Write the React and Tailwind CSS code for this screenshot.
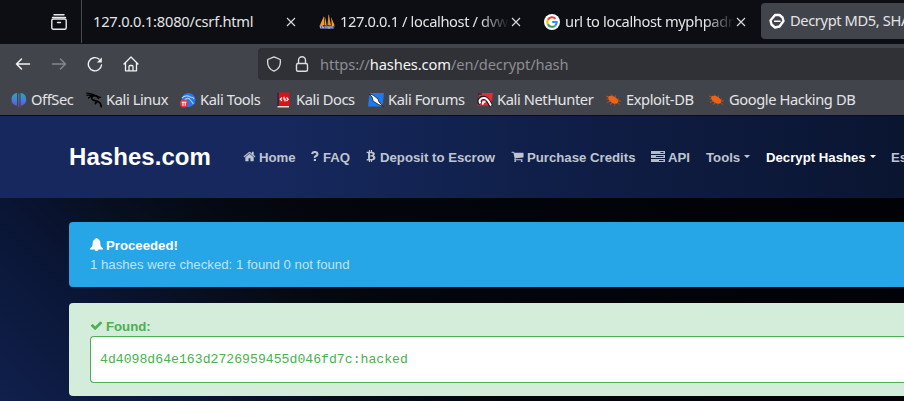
import React from "react";
import { FaBtc } from "react-icons/fa";

const Close = () => (
  <svg className="h-[10px] w-[10px] shrink-0" viewBox="0 0 10 10" stroke="#dcdce0" strokeWidth="1.1" fill="none">
    <path d="M1 1l8 8M9 1L1 9" />
  </svg>
);

const Boats = () => (
  <svg className="h-4 w-4 shrink-0" viewBox="0 0 16 16">
    <path d="M5 2L1 11h4zM6.500 3l1 8H5.500zM9.500 0L8.500 11h3.500zM12 3l3.500 8h-2.500z" fill="#f39a28" />
    <path d="M5.500 3v8M10 1v10M12.500 4v7" stroke="#b56b20" strokeWidth=".5" />
    <path d="M0 11.500h16l-1.500 3.500H1.500z" fill="#60608c" />
    <path d="M1.500 14v-2.500h2v2h1.500M7 14v-2.500M9 12v2h2v-2.500M13 14v-2.500h2" stroke="#c5c5d2" strokeWidth=".8" fill="none" />
  </svg>
);

const Google = () => (
  <svg className="h-4 w-4 shrink-0" viewBox="0 0 16 16" fill="none" strokeWidth="2.100">
    <circle cx="8" cy="8" r="8" fill="#fff" />
    <path d="M11.500 4.700A4.800 4.800 0 0 0 3.800 5.800" stroke="#ea4335" />
    <path d="M3.800 5.800a4.700 4.700 0 0 0 0 4.400" stroke="#fbbc05" />
    <path d="M3.800 10.200a4.800 4.800 0 0 0 7.500 1.500" stroke="#34a853" />
    <path d="M11.300 11.700A4.700 4.700 0 0 0 12.700 8H8.200" stroke="#4285f4" />
  </svg>
);

const HashLogo = () => (
  <svg className="h-4 w-4 shrink-0" viewBox="0 0 16 16" fill="none" stroke="#fff">
    <path d="M6 2h4.500L13.500 4.500 14.500 8 10.500 13.500 6 14.500 2.500 11.500 1.500 7.500z" strokeWidth="2.400" strokeLinejoin="round" />
    <path d="M5 8.200h6.500" strokeWidth="1.600" />
  </svg>
);

const OffSec = () => (
  <svg className="h-4 w-4 shrink-0" viewBox="0 0 16 16">
    <defs>
      <linearGradient id="offsec" x1="0" y1="0" x2="0" y2="1">
        <stop offset="0" stopColor="#2aa8bd" />
        <stop offset=".55" stopColor="#4779dc" />
        <stop offset="1" stopColor="#7045d0" />
      </linearGradient>
    </defs>
    <path d="M6 .7v13Q.5 13 .5 7.500T6 .7zM7.400 1.500h.9v14h-.9zM9.600.7Q15.200 2 15.200 7.500T9.600 13.700z" fill="url(#offsec)" />
  </svg>
);

const KaliLinux = () => (
  <svg className="h-4 w-4 shrink-0" viewBox="0 0 16 16" fill="none" stroke="#000" strokeLinecap="round">
    <path d="M.5 1L6 2.200 10 3.800M1 3.200L6 3.400M2.500 6Q5 3.700 8 4M11.500 4.500l3 .8" strokeWidth="1.200" />
    <path d="M6.500 3.500Q4.500 7 7.500 8.200Q10 9 12.500 9.800Q15 11 15.200 14.500M11 9.500l-1.500 2" strokeWidth="1.800" />
    <path d="M6.500 3.200l4.500 1 1.500 2" strokeWidth="1.800" />
  </svg>
);

const KaliTools = () => (
  <svg className="h-4 w-4 shrink-0" viewBox="0 0 16 16">
    <circle cx="8.500" cy="8" r="7" fill="#2677ed" />
    <path d="M2 6Q6 2.500 10.500 5q3 .2 3.500 2M4.500 8Q8 5 10 7.500T13.500 12" stroke="#a9ccff" strokeWidth="1.200" fill="none" />
    <circle cx="4" cy="11.500" r="4" fill="#ea3541" />
    <path d="M1.700 10.200h4.700M3 10.200v3.600M5.200 10.200v3.600" stroke="#fff" strokeWidth="1" />
  </svg>
);

const KaliDocs = () => (
  <svg className="h-4 w-4 shrink-0" viewBox="0 0 16 16">
    <path d="M1.500.5H13.500V14H1.500z" fill="#dc1218" />
    <path d="M1 .5h2V15H1z" fill="#26304e" />
    <path d="M1.500 14h11.500v1.500H1.500z" fill="#ddd8d6" />
    <path d="M6 5.500L4.300 7.200 6 9M10.500 5.500l1.700 1.700L10.500 9M8 4.800v2.400h1v2.400" stroke="#fff" strokeWidth="1.200" fill="none" />
  </svg>
);

const KaliForums = () => (
  <svg className="h-4 w-4 shrink-0" viewBox="0 0 16 16">
    <path d="M1.500 1H16l-1.500 13.500H0z" fill="#1e78ee" />
    <path d="M1 2l4 1 5 4 1 3 4.500 4.500-5-2L5 9 4 5z" fill="#fff" stroke="#15171c" strokeWidth=".8" />
  </svg>
);

const NetHunter = () => (
  <svg className="h-4 w-4 shrink-0" viewBox="0 0 16 16">
    <path d="M2.500 1H16l-2 12.500H.5z" fill="#e32c35" />
    <path d="M3.500 12C.5 8.500 4 5 7.500 6s5 4.500 6.500 8" stroke="#16181c" strokeWidth="4" fill="none" />
    <path d="M3.500 11.500C1 8.500 4 5.500 7.500 6s4.500 4 6.500 7.500M6 12.500q-1-3 2.500-3" stroke="#fff" strokeWidth="2" fill="none" />
    <path d="M1 2h4" stroke="#16181c" />
  </svg>
);

const Bug = () => (
  <svg className="h-4 w-4 shrink-0" viewBox="0 0 16 16" stroke="#ed6316" fill="none">
    <ellipse cx="7.200" cy="7.700" rx="5.600" ry="3.200" transform="rotate(32 7.200 7.700)" fill="#ed6316" stroke="none" />
    <path d="M3 5L0 4M2.500 7H.5M4.500 9L1 10.500M6.500 11l-2.500 1.500M9 12.500l-.5 1M6.500 4.500L5.500 2.500M9 5.500l.5-2M11 7.500l2-.5M12 9h3M12.500 11l1 1.500" strokeWidth=".6" />
  </svg>
);

const HOME =
  "M1472 992v480q0 26-19 45t-45 19h-384v-384h-256v384h-384q-26 0-45-19t-19-45v-480q0-1 .5-3t.5-3l575-474 575 474q1 2 1 6zm223-69l-62 74q-8 9-21 11h-3q-13 0-21-7l-692-577-692 577q-12 8-24 7-13-2-21-11l-62-74q-8-10-7-23.500t11-21.500l719-599q32-26 76-26t76 26l244 204v-195q0-14 9-23t23-9h192q14 0 23 9t9 23v408l219 182q10 8 11 21.500t-7 23.500z";
const CART =
  "M704 1536q0 52-38 90t-90 38-90-38-38-90 38-90 90-38 90 38 38 90zm896 0q0 52-38 90t-90 38-90-38-38-90 38-90 90-38 90 38 38 90zm128-1088v512q0 24-16.500 42.500t-40.500 21.500l-1044 122q13 60 13 70 0 16-24 64h920q26 0 45 19t19 45-19 45-45 19h-1024q-26 0-45-19t-19-45q0-11 8-31.500t16-36 21.500-40 15.500-29.500l-177-823h-204q-26 0-45-19t-19-45 19-45 45-19h256q16 0 28.500 6.500t19.500 15.500 13 24.500 8 26 5.500 29.500 4.500 26h1201q26 0 45 19t19 45z";
const CHECK =
  "M1671 566q0 40-28 68l-724 724-136 136q-28 28-68 28t-68-28l-136-136-362-362q-28-28-28-68t28-68l136-136q28-28 68-28t68 28l294 295 656-657q28-28 68-28t68 28l136 136q28 28 28 68z";

const Glyph = ({ d }) => (
  <svg className="-mt-[3px] h-[13px] w-[13px] shrink-0" viewBox="0 0 1792 1792" fill="currentColor"><path d={d} /></svg>
);

const Question = () => (
  <svg className="-mt-[3px] h-[10px] w-[8px] shrink-0" viewBox="0 0 8 10" fill="none" stroke="currentColor">
    <path d="M1 3Q1.500 1 3.800 1T6.500 3Q6.500 4.200 5 5T3.900 6.800" strokeWidth="2.100" />
    <path d="M3.900 8v2" strokeWidth="2.200" />
  </svg>
);

const Bell = () => (
  <svg className="-mt-[2px] h-[13px] w-[13px] shrink-0" viewBox="0 0 13 13" fill="currentColor">
    <path d="M5.600 0h1.800v1C9.500 1.500 10.300 3.200 10.300 5c0 3.200 1 4.300 2.700 5.500v1H8.300a1.800 1.500 0 0 1-3.600 0H0v-1C1.700 9.300 2.700 8.200 2.700 5c0-1.800.8-3.500 2.900-4z" />
  </svg>
);

const Server = () => (
  <svg className="-mt-[3px] h-[11px] w-[14px] shrink-0" viewBox="0 0 14 11" fill="currentColor">
    <path fillRule="evenodd" d="M0 0h14v3H0zM9.500 1v1h3V1zM0 4h14v3H0zM5 5v1h7.500V5zM0 8h14v3H0zM8 9v1h4.500V9z" opacity=".95" />
  </svg>
);

const Caret = () => (
  <svg className="-mt-[3px] ml-1 h-[3px] w-[6px] shrink-0" viewBox="0 0 6 3" fill="currentColor"><path d="M0 0h6L3 3.200z" /></svg>
);

const Tab = ({ width, icon, textWidth, children, fade }) => (
  <div className={`flex h-full shrink-0 items-center ${width}`}>
    {icon && <span className="mr-[5px] flex">{icon}</span>}
    <span className={`overflow-hidden pb-[2px] whitespace-nowrap ${textWidth} ${fade ? "tracking-[-0.38px] [mask-image:linear-gradient(to_right,#000_82%,transparent_99%)]" : "tracking-[-0.22px]"}`}>{children}</span>
    <Close />
  </div>
);

const Bookmark = ({ width, icon, children }) => (
  <div className={`flex shrink-0 items-center gap-1 whitespace-nowrap ${width}`}>
    {icon}
    <span className="pb-[2px]">{children}</span>
  </div>
);

const NavItem = ({ width, children, active }) => (
  <div className={`flex shrink-0 items-center pt-[2px] whitespace-nowrap ${width} ${active ? "text-white" : "text-[#bfc4d1]"}`}>{children}</div>
);

export default function App() {
  return (
    <div className="flex h-[401px] w-[904px] flex-col overflow-hidden bg-black font-['Liberation_Sans',sans-serif]">
      <div className="shrink-0 bg-[#42444c] font-['Noto_Sans',sans-serif] text-[14.67px] tracking-[-0.3px] text-[#e4e4e6]">
        <div className="flex h-[44px] bg-[#0d0e13] pb-px">
          <div className="flex w-[82px] shrink-0 items-center border-r border-[#4b4c52] pl-[51px]">
            <svg className="h-4 w-4" viewBox="0 0 16 16" fill="none" stroke="#e9e9eb" strokeWidth="1.400" strokeLinecap="round">
              <path d="M3 .8h10M1.500 3.500h13" />
              <rect x=".8" y="5" width="14.400" height="10.200" rx="1.500" />
              <path d="M6.500 8.500h3" />
            </svg>
          </div>
          <Tab width="w-[237px] pl-[11px]" textWidth="w-[193px]">127.0.0.1:8080/csrf.html</Tab>
          <Tab width="w-[225px]" icon={<Boats />} textWidth="w-[171px]" fade>127.0.0.1 / localhost / dvwa</Tab>
          <Tab width="w-[217px]" icon={<Google />} textWidth="w-[171px]" fade>url to localhost myphpadmin</Tab>
          <div className="mt-[3px] flex h-9 flex-1 items-center gap-[5px] overflow-hidden rounded-l bg-[#42444c] pl-2 tracking-[-0.38px] whitespace-nowrap">
            <HashLogo />
            <span className="pb-[2px]">Decrypt MD5, SHA1</span>
          </div>
        </div>

        <div className="flex h-[36px] pt-1">
          <div className="flex w-[258px] shrink-0 items-center gap-5 pl-[15px]">
            <svg className="h-4 w-4" viewBox="0 0 16 16" fill="none" stroke="#f2f2f3" strokeWidth="1.500" strokeLinecap="round" strokeLinejoin="round"><path d="M14.500 8H1.500M6.500 3L1.500 8l5 5" /></svg>
            <svg className="h-4 w-4" viewBox="0 0 16 16" fill="none" stroke="#85868b" strokeWidth="1.500" strokeLinecap="round" strokeLinejoin="round"><path d="M1.500 8h13M9.500 3l5 5-5 5" /></svg>
            <svg className="h-4 w-4" viewBox="0 0 16 16" fill="none" stroke="#f2f2f3" strokeWidth="1.400" strokeLinecap="round"><path d="M14.500 9A6.600 6.600 0 1 1 12 3" /><path d="M14.800 1.500v5h-5z" fill="#f2f2f3" stroke="none" /></svg>
            <svg className="h-4 w-4" viewBox="0 0 16 16" fill="none" stroke="#f2f2f3" strokeWidth="1.300" strokeLinecap="round" strokeLinejoin="round"><path d="M1 8l7-7 7 7M2.500 7v7.800h11V7M6 14.500v-4a1 1 0 0 1 1-1h2a1 1 0 0 1 1 1v4" /></svg>
          </div>
          <div className="flex h-8 flex-1 items-center rounded-l bg-[#303136] pl-2">
            <svg className="mr-3 h-4 w-4" viewBox="0 0 16 16" fill="none" stroke="#dddde0" strokeWidth="1.300" strokeLinejoin="round"><path d="M8 .8l6.200 2.700c.8 5-1.200 9.500-6.200 11.700C3 13 1 8.500 1.800 3.500z" /></svg>
            <svg className="mr-[10px] h-4 w-4" viewBox="0 0 16 16" fill="none" stroke="#dddde0" strokeWidth="1.400"><rect x="2.500" y="7.500" width="11" height="7.700" rx="1.500" /><path d="M4.500 7.500V4.200a3.500 3.500 0 0 1 7 0v3.300" /></svg>
            <span className="tracking-[-0.1px] text-[#8d8d93]">https://<span className="text-[#f4f4f5]">hashes.com</span>/en/decrypt/hash</span>
          </div>
        </div>

        <div className="flex h-[35px] items-center pt-1 pl-[11px] tracking-[-0.4px]">
          <Bookmark width="w-[75px]" icon={<OffSec />}>OffSec</Bookmark>
          <Bookmark width="w-[94px]" icon={<KaliLinux />}>Kali Linux</Bookmark>
          <Bookmark width="w-[96px]" icon={<KaliTools />}>Kali Tools</Bookmark>
          <Bookmark width="w-[92px]" icon={<KaliDocs />}>Kali Docs</Bookmark>
          <Bookmark width="w-[109px]" icon={<KaliForums />}>Kali Forums</Bookmark>
          <Bookmark width="w-[129px]" icon={<NetHunter />}>Kali NetHunter</Bookmark>
          <Bookmark width="w-[103px]" icon={<Bug />}>Exploit-DB</Bookmark>
          <Bookmark width="w-[160px]" icon={<Bug />}>Google Hacking DB</Bookmark>
        </div>
      </div>

      <div className="flex h-[83px] shrink-0 items-center overflow-hidden border-t border-[#0c0d11] bg-[linear-gradient(to_right,#16285d_0px,#16285d_280px,#101f49_540px,#0a1530_904px)] pl-[69px] text-[13.200px] font-bold">
        <div className="w-[174px] shrink-0 text-[24px] leading-none tracking-[0.05px] text-white">Hashes.com</div>
        <NavItem width="w-[68px] gap-[3px]"><Glyph d={HOME} />Home</NavItem>
        <NavItem width="w-[55px] gap-[4px]"><Question />FAQ</NavItem>
        <NavItem width="w-[145px] gap-[4px]"><FaBtc className="-mt-[3px] h-[12px] w-[10px]" />Deposit to Escrow</NavItem>
        <NavItem width="w-[140px] gap-[3px]"><Glyph d={CART} />Purchase Credits</NavItem>
        <NavItem width="w-[55px] gap-[3px]"><Server />API</NavItem>
        <NavItem width="w-[60px]">Tools<Caret /></NavItem>
        <NavItem width="w-[125px]" active>Decrypt Hashes<Caret /></NavItem>
        <NavItem width="w-[60px]">Escrow</NavItem>
      </div>

      <div className="flex flex-1 flex-col gap-4 bg-[linear-gradient(45deg,#10204c_0px,#0a1534_143px,#080f20_214px,#050913_290px,#03060c_355px,#02040b_500px,#010206_780px)] pt-6 pl-[69px] text-[13.200px]">
        <div className="h-[65px] shrink-0 rounded-l bg-[#26a6e6] pt-[14px] pl-[21px]">
          <div className="flex h-[19px] items-center gap-[3px] font-bold text-white"><Bell />Proceeded!</div>
          <div className="h-[19px] leading-[19px] text-[#bee4f8]">1 hashes were checked: 1 found 0 not found</div>
        </div>
        <div className="h-[93px] shrink-0 rounded-l bg-[#d4ecda] pt-[14px] pl-[21px]">
          <div className="flex h-[19px] items-center gap-[3px] font-bold text-[#4caf50]"><Glyph d={CHECK} />Found:</div>
          <div className="flex h-[47px] items-center rounded-l border border-r-0 border-[#4caf50] bg-white pl-[9px] font-['Liberation_Mono',monospace] text-[13.170px] text-[#4caf50]">4d4098d64e163d2726959455d046fd7c:hacked</div>
        </div>
      </div>
    </div>
  );
}
